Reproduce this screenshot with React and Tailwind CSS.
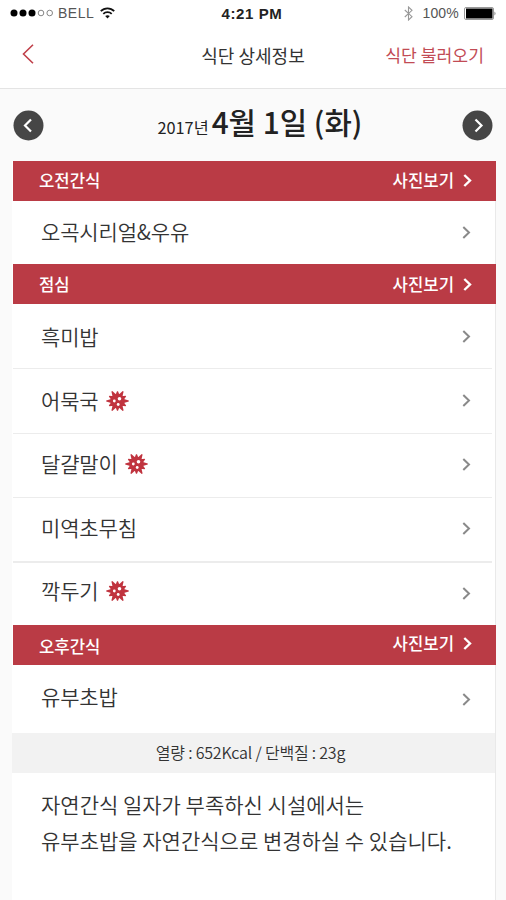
import { clsx } from 'clsx'

const meals = [
  {
    title: '오전간식',
    titlePad: 'pb-0.5',
    linkPad: 'pb-0.5',
    items: [{ name: '오곡시리얼&우유', row: 'h-[63px]', label: 'pb-0.5' }],
  },
  {
    title: '점심',
    items: [
      { name: '흑미밥', row: 'h-[65px] border-b' },
      { name: '어묵국', allergy: true, row: 'h-[65px] border-b pb-px' },
      { name: '달걀말이', allergy: true, row: 'h-[64px] border-b pb-0.5', label: 'pb-0.5' },
      { name: '미역초무침', row: 'h-[65px] border-b-2 pb-0.5', label: 'pb-[3px]' },
      { name: '깍두기', allergy: true, row: 'h-[62px] pb-0.5', label: 'pb-[5px]' },
    ],
  },
  {
    title: '오후간식',
    titlePad: 'pt-0.5',
    linkPad: 'pb-1',
    items: [{ name: '유부초밥', row: 'h-[68px]', label: 'pb-[5px]' }],
  },
]

export default function App() {
  return (
    <div
      className="flex h-[900px] w-[506px] flex-col overflow-hidden bg-[#fafafa] text-[#333]"
      style={{ fontFamily: '"Noto Sans CJK KR", "Noto Sans", sans-serif' }}
    >
      <header className="h-[89px] shrink-0 border-b border-[#e4e4e4] bg-white">
        <StatusBar />
        <NavBar />
      </header>
      <DateBar />
      <main className="ml-3 flex w-[484px] flex-1 flex-col border-r border-[#e9e9e9] bg-white">
        {meals.map((meal) => (
          <Meal key={meal.title} {...meal} />
        ))}
        <div className="flex h-10 items-center justify-center bg-[#f2f2f2] pr-[6px] pb-[3px] text-[16px] font-[350] tracking-[-0.2px] text-[#333]">
          열량 : 652Kcal / 단백질 : 23g
        </div>
        <p className="pt-[13px] pl-[29px] text-[21px] leading-9 font-[350] whitespace-nowrap">
          자연간식 일자가 부족하신 시설에서는
          <br />
          유부초밥을 자연간식으로 변경하실 수 있습니다.
        </p>
      </main>
    </div>
  )
}

function StatusBar() {
  return (
    <div
      className="grid h-[26px] grid-cols-3 items-center px-[10px] text-[13px] leading-none text-[#555]"
      style={{ fontFamily: '"Liberation Sans", sans-serif' }}
    >
      <div className="flex items-center">
        <svg width="45" height="8" viewBox="0 0 45 8">
          <circle cx="4" cy="4" r="3.5" fill="#000" />
          <circle cx="13" cy="4" r="3.5" fill="#000" />
          <circle cx="22" cy="4" r="3.5" fill="#000" />
          <circle cx="31" cy="4" r="2.8" fill="none" stroke="#777" strokeWidth="0.9" />
          <circle cx="39.7" cy="4" r="2.8" fill="none" stroke="#777" strokeWidth="0.9" />
        </svg>
        <span className="ml-[3px] text-[14px] tracking-[0.5px]">BELL</span>
        <svg className="ml-[6px]" width="15" height="12" viewBox="0 0 15 12" fill="none" stroke="#111" strokeWidth="1.8">
          <path d="M0.8 4.2C4.5 0.3 10.5 0.3 14.2 4.2" />
          <path d="M3.3 6.8C5.6 4.5 9.4 4.5 11.7 6.8" />
          <path d="M7.5 11.5L5.2 9.1C6.5 7.9 8.5 7.9 9.8 9.1Z" fill="#111" stroke="none" />
        </svg>
      </div>
      <span className="pr-[2px] text-center text-[15px] font-bold tracking-[0.6px] whitespace-nowrap text-[#222]">
        4:21 PM
      </span>
      <div className="flex items-center justify-end">
        <svg width="9" height="15" viewBox="0 0 9 15" fill="none" stroke="#999" strokeWidth="1.1">
          <path d="M0.8 4L8 10.7L4.5 14V1L8 4.3L0.8 11" />
        </svg>
        <span className="ml-[9px] text-[14px] tracking-[0.2px]">100%</span>
        <svg className="-mr-[1px] ml-[5px]" width="33" height="13" viewBox="0 0 33 13">
          <rect x="0.5" y="0.5" width="29" height="12" rx="1.5" fill="#fff" stroke="#999" />
          <rect x="2" y="1.5" width="26.5" height="10" fill="#000" />
          <path d="M30.5 4.5Q32.5 6.5 30.5 8.5Z" fill="#777" />
        </svg>
      </div>
    </div>
  )
}

function NavBar() {
  return (
    <div className="grid h-[57px] grid-cols-[100px_1fr_100px] items-center px-[22px]">
      <svg className="mb-0.5" width="12" height="20" viewBox="0 0 12 20" fill="none" stroke="#c0404a" strokeWidth="1.6">
        <path d="M11 0.8L1.5 10L11 19.2" />
      </svg>
      <h1 className="text-center text-[18px] leading-none">식단 상세정보</h1>
      <button type="button" className="text-right text-[17.2px] leading-none whitespace-nowrap text-[#c24b55]">
        식단 불러오기
      </button>
    </div>
  )
}

function DateBar() {
  return (
    <div className="flex h-[72px] shrink-0 items-center justify-between px-[13px]">
      <RoundArrow left />
      <p className="flex items-baseline gap-[3px] pb-[6px] pl-[14px] leading-none text-[#222]">
        <span className="text-[16.3px]">2017년</span>
        <span className="text-[29.8px] font-medium">4월 1일 (화)</span>
      </p>
      <RoundArrow />
    </div>
  )
}

function RoundArrow({ left }) {
  return (
    <svg width="31" height="31" viewBox="0 0 31 31" fill="none">
      <circle cx="15.5" cy="15.5" r="15" fill="#464646" />
      <path d={left ? 'M18 9.5L12 15.5L18 21.5' : 'M13.5 9.5L19.5 15.5L13.5 21.5'} stroke="#fff" strokeWidth="2.2" />
    </svg>
  )
}

function Meal({ title, titlePad, linkPad, items }) {
  return (
    <section>
      <div className="-mr-px ml-px flex h-10 items-center justify-between bg-[#ba3b45] pr-[24px] pl-[26px] text-[16.7px] leading-none font-medium text-white">
        <h2 className={titlePad}>{title}</h2>
        <div className={clsx('flex items-center gap-[9px]', linkPad)}>
          사진보기
          <Chevron className="mt-0.5 text-white" bold />
        </div>
      </div>
      <ul>
        {items.map((item) => (
          <li
            key={item.name}
            className={clsx('mr-[3px] ml-px flex items-center justify-between border-[#ececec] pr-[21px] pl-[28px]', item.row)}
          >
            <span className={clsx('flex items-center gap-[7px] text-[21px] leading-none font-[350] tracking-[-0.15px]', item.label)}>
              {item.name}
              {item.allergy && <AllergyMark />}
            </span>
            <Chevron className="text-[#8a8a8a]" />
          </li>
        ))}
      </ul>
    </section>
  )
}

function Chevron({ className, bold }) {
  return (
    <svg className={className} width="9" height="13" viewBox="0 0 9 13" fill="none" stroke="currentColor" strokeWidth={bold ? 2.4 : 2}>
      <path d="M1.3 1L7 6.5L1.3 12" />
    </svg>
  )
}

// Round germ with long and short spikes, shown next to menus that contain an allergen.
function AllergyMark() {
  return (
    <svg width="23" height="22" viewBox="-11.5 -11 23 22" fill="#c0343f">
      {[30, 90, 150, 210, 270, 330].map((angle) => (
        <path key={angle} d="M-2.3 -5.5L-0.5 -11.3H0.5L2.3 -5.5Z" transform={`rotate(${angle})`} />
      ))}
      {[0, 60, 120, 180, 240, 300].map((angle) => (
        <path key={angle} d="M-2.2 -5.5L-0.5 -9.7H0.5L2.2 -5.5Z" transform={`rotate(${angle})`} />
      ))}
      <circle r="7" />
      <circle cx="2" cy="-2.2" r="1.8" fill="#fff" />
      <circle cx="-3.2" cy="0" r="1.4" fill="#fff" />
      <circle cx="0.7" cy="3.5" r="1.4" fill="#fff" />
    </svg>
  )
}
